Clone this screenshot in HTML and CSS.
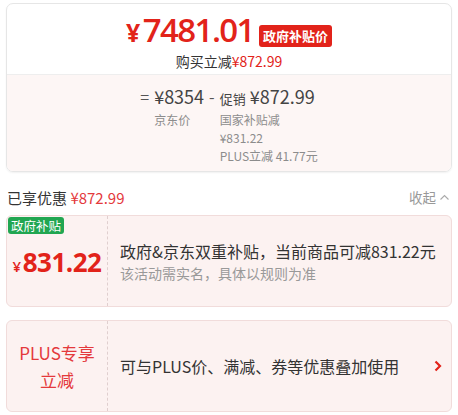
FILE: index.html
```html
<!DOCTYPE html>
<html lang="zh-CN">
<head>
    <meta charset="UTF-8">
    <meta name="viewport" content="width=device-width, initial-scale=1.0">
    <title>价格明细</title>
    <link rel="stylesheet" href="styles.css">
</head>
<body>
    <div class="page">
        <div class="price-card">
            <div class="price-head">
                <div class="price-main">
                    <span class="price-big"><span class="yen">¥</span>7481.01</span>
                    <span class="tag-red">政府补贴价</span>
                </div>
                <div class="price-cut">购买立减<span class="red">¥872.99</span></div>
            </div>
            <div class="price-calc">
                <div class="calc-grid">
                    <span class="op">=</span>
                    <span class="calc-val">¥8354</span>
                    <span class="op">-</span>
                    <span class="calc-val"><small>促销</small> ¥872.99</span>

                    <span></span>
                    <span class="calc-note">京东价</span>
                    <span></span>
                    <div class="calc-list">
                        <div class="calc-note">国家补贴减<br>¥831.22</div>
                        <div class="calc-note">PLUS立减 41.77元</div>
                    </div>
                </div>
            </div>
        </div>

        <div class="saved-row">
            <div class="saved">已享优惠 <span class="red-soft">¥872.99</span></div>
            <div class="fold">收起
                <svg width="11" height="11" viewBox="0 0 11 11"><path d="M1.5 7.5 L5.5 3.5 L9.5 7.5" fill="none" stroke="#aaa" stroke-width="1.1"/></svg>
            </div>
        </div>

        <div class="promo">
            <div class="promo-left">
                <span class="tag-green">政府补贴</span>
                <div class="promo-price"><span class="yen-sm">¥</span>831.22</div>
            </div>
            <div class="promo-body">
                <div class="promo-title">政府&amp;京东双重补贴，当前商品可减831.22元</div>
                <div class="promo-sub">该活动需实名，具体以规则为准</div>
            </div>
        </div>

        <div class="promo">
            <div class="promo-left">
                <div class="plus-label">PLUS专享<br>立减</div>
            </div>
            <div class="promo-body promo-row">
                <div class="promo-title">可与PLUS价、满减、券等优惠叠加使用</div>
                <svg class="arrow" width="10" height="14" viewBox="0 0 10 14"><path d="M2.5 2.5 L7 7 L2.5 11.5" fill="none" stroke="#e2231a" stroke-width="2.2"/></svg>
            </div>
        </div>
    </div>
</body>
</html>
```

FILE: styles.css
```css
:root {
    --red: #e2231a;
    --red-soft: #e4393c;
    --text: #333333;
    --gray: #999999;
    --border: #e6e6e6;
    --pink-bg: #fdf6f5;
    --promo-bg: #fcf2f1;
    --promo-border: #f1dcdb;
}

html, body {
    margin: 0;
    padding: 0;
    background-color: #ffffff;
}

body {
    font-family: "Noto Sans CJK SC", "Noto Sans", sans-serif;
    color: var(--text);
}

.page {
    padding: 3px 6px 0 6px;
}

.price-card {
    border: 1px solid var(--border);
    border-radius: 7px;
    overflow: hidden;
    box-shadow: 0 1px 2px rgba(0, 0, 0, 0.06);
}

.price-head {
    height: 70px;
    display: flex;
    flex-direction: column;
    align-items: center;
    border-bottom: 1px solid #eeeeee;
}

.price-main {
    display: flex;
    align-items: flex-end;
    gap: 5px;
    margin-top: 3px;
}

.price-big {
    color: var(--red);
    font-family: "Open Sans", "Noto Sans CJK SC", sans-serif;
    font-weight: 600;
    font-size: 33px;
    line-height: normal;
    letter-spacing: -1.6px;
}

.price-big .yen {
    font-size: 25px;
    margin-right: 4px;
    font-weight: 700;
}

.tag-red {
    background-color: var(--red);
    color: #ffffff;
    font-size: 13px;
    font-weight: 700;
    line-height: 22px;
    padding: 0 4px;
    border-radius: 3px;
    margin-bottom: 5px;
}

.price-cut {
    font-size: 14px;
    line-height: 18px;
}

.red {
    color: var(--red);
}

.red-soft {
    color: var(--red-soft);
}

.price-calc {
    background-color: var(--pink-bg);
    height: 96px;
    display: flex;
    justify-content: center;
}

.calc-grid {
    display: grid;
    grid-template-columns: auto auto auto auto;
    column-gap: 5px;
    align-content: start;
    margin-top: 10px;
}

.op {
    font-size: 16px;
    line-height: 22px;
    color: #555555;
}

.calc-val {
    font-size: 18px;
    line-height: 22px;
    color: #444444;
}

.calc-val small {
    font-size: 13px;
}

.calc-note {
    font-size: 12px;
    line-height: 18px;
    color: #8c8c8c;
}

.calc-grid > .calc-note {
    margin-top: 1px;
}

.calc-list {
    display: flex;
    flex-direction: column;
    margin-top: 1px;
}

.saved-row {
    display: flex;
    justify-content: space-between;
    align-items: center;
    margin: 15px 2px 0 1px;
    height: 20px;
}

.saved {
    font-size: 15px;
}

.fold {
    font-size: 13.5px;
    color: var(--gray);
    display: flex;
    align-items: center;
    gap: 3px;
}

.promo {
    display: flex;
    background-color: var(--promo-bg);
    border: 1px solid var(--promo-border);
    border-radius: 6px;
    height: 90px;
    margin-top: 8px;
}

.promo + .promo {
    margin-top: 13px;
}

.promo-left {
    position: relative;
    width: 100px;
    border-right: 1px dashed #e0cfcf;
    display: flex;
    align-items: center;
    justify-content: center;
    flex-shrink: 0;
}

.tag-green {
    position: absolute;
    top: 1px;
    left: 1px;
    background-color: #21a651;
    color: #ffffff;
    font-size: 12.5px;
    line-height: 17px;
    padding: 0 3px;
    border-radius: 3px;
}

.promo-price {
    color: var(--red);
    font-family: "Open Sans", "Noto Sans CJK SC", sans-serif;
    font-weight: 700;
    font-size: 26px;
    letter-spacing: -0.5px;
    margin-top: 2px;
}

.yen-sm {
    font-size: 15px;
    font-weight: 600;
    margin-right: 2px;
}

.plus-label {
    color: var(--red-soft);
    font-size: 17px;
    line-height: 27px;
    text-align: center;
}

.promo-body {
    flex: 1;
    display: flex;
    flex-direction: column;
    justify-content: center;
    padding-left: 12px;
}

.promo-row {
    flex-direction: row;
    align-items: center;
    justify-content: space-between;
    padding-right: 8px;
}

.promo-title {
    font-size: 16px;
    line-height: 24px;
    color: var(--text);
}

.promo-sub {
    font-size: 14px;
    line-height: 21px;
    color: var(--gray);
}

.arrow {
    display: block;
}
```
